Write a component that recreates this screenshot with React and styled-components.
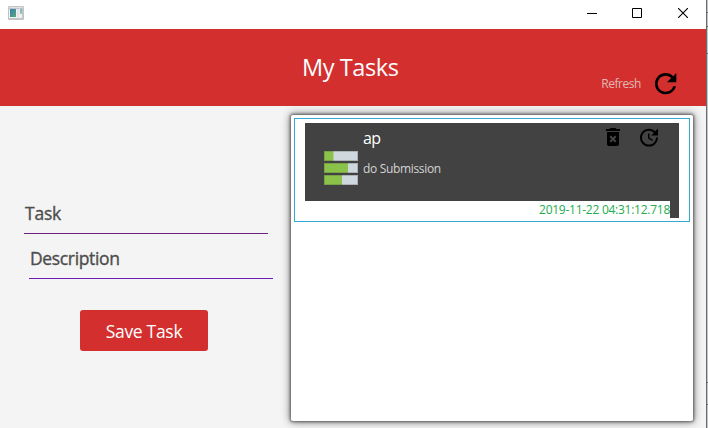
import React from "react";
import styled, { createGlobalStyle } from "styled-components";
import { MdRefresh, MdDeleteForever, MdUpdate } from "react-icons/md";

const GlobalStyle = createGlobalStyle`
  body { margin: 0; background: #fff; overflow: hidden; font-family: "Open Sans", "Noto Sans", sans-serif; }
  *, *::before, *::after { box-sizing: border-box; }
  svg { display: block; flex: none; }
`;

const Screen = styled.div`
  display: grid;
  grid-template-columns: 706px 2px;
  width: 708px;
  height: 428px;
`;

const Window = styled.div`
  display: flex;
  flex-direction: column;
  min-width: 0;
  background: #f4f4f4;
`;

const Backdrop = styled.div`
  display: flex;
  flex-direction: column;
  border-left: 1px solid #6b6d6d;
  background: #c3c5c6;
`;

const Notch = styled.div`
  height: 1px;
  margin-top: ${(p) => p.$gap}px;
  background: #606263;
`;

const TitleBar = styled.div`
  display: flex;
  justify-content: space-between;
  height: 29px;
  padding: 6px 18px 0 8px;
  background: #fff;
`;

const WindowControls = styled.div`
  display: grid;
  grid-template-columns: 45px 46px 10px;
  padding-top: 2px;
`;

const Header = styled.header`
  display: grid;
  grid-template-columns: 302px 1fr auto;
  height: 77px;
  padding-right: 25px;
  background: #d32f2f;
`;

const Label = styled.span`
  display: block;
  white-space: nowrap;
  font-size: ${(p) => p.$size}px;
  line-height: ${(p) => p.$line}px;
  letter-spacing: ${(p) => p.$track || 0}px;
  color: ${(p) => p.$color};
  -webkit-text-stroke: ${(p) => p.$stroke || 0}px ${(p) => p.$color};
`;

const Title = styled.div`
  grid-column: 2;
  padding-top: 22px;
`;

const RefreshAction = styled.div`
  display: flex;
  gap: 8px;
  padding-top: 38px;
  span { padding-top: 7px; }
`;

const Body = styled.main`
  display: flex;
  height: 322px;
`;

const Form = styled.form`
  display: flex;
  flex-direction: column;
  width: 291px;
  padding-top: 94px;
`;

const Field = styled.div`
  width: 244px;
  height: ${(p) => p.$height}px;
  margin-left: ${(p) => p.$left}px;
  padding-left: 1px;
  border-bottom: 1px solid ${(p) => p.$line};
`;

const SaveButton = styled.button`
  display: flex;
  justify-content: center;
  width: 128px;
  height: 41px;
  margin: 31px 0 0 80px;
  padding: 8px 0 0;
  border: 0;
  border-radius: 3px;
  background: #d32f2f;
  font-family: inherit;
`;

const ListPanel = styled.section`
  width: 402px;
  height: 306px;
  margin-top: 9px;
  padding: 3px;
  background: #fff;
  border-radius: 2px;
  box-shadow: 0 0 3px 1px rgba(0, 0, 0, 0.5), 0 0 9px 1px rgba(0, 0, 0, 0.45);
`;

const ListCell = styled.div`
  width: 396px;
  height: 104px;
  padding: 4px 10px;
  border: 1px solid #33a9cf;
`;

const TaskCard = styled.article`
  display: grid;
  grid-template: 78px 17px / 365px 9px;
  width: 374px;
  background: #424242;
`;

const TaskMain = styled.div`
  display: grid;
  grid-template-columns: 58px 1fr auto;
  grid-column: 1 / 3;
  padding: 2px 18px 0 0;
`;

const ProgressIcon = styled.div`
  padding: 26px 0 0 19px;
`;

const TaskActions = styled.div`
  display: flex;
  gap: 12px;
`;

const DateBar = styled.div`
  display: flex;
  justify-content: flex-end;
  background: #fff;
`;

const AppIcon = () => (
  <svg width="16" height="14" viewBox="0 0 16 14">
    <defs>
      <linearGradient id="pane" x1="0" y1="0" x2="1" y2="1">
        <stop offset="0" stopColor="#3f79b5" />
        <stop offset="1" stopColor="#54ad74" />
      </linearGradient>
    </defs>
    <rect width="16" height="14" rx="1" fill="#bfc5c8" />
    <rect x="1" y="1" width="14" height="1" fill="#dfe3e5" />
    <rect x="1" y="3" width="13" height="9" fill="#eef0f1" />
    <rect x="2" y="3" width="6" height="8" fill="url(#pane)" />
    <rect x="9" y="3" width="2" height="8" fill="#e0e3e5" />
    <rect x="12" y="3" width="2" height="3" fill="#7fb6d0" />
    <rect x="12" y="6" width="2" height="2" fill="#98cda6" />
  </svg>
);

const MinimizeIcon = () => (
  <svg width="10" height="10"><path d="M0 5.5h10" stroke="#000" /></svg>
);
const MaximizeIcon = () => (
  <svg width="10" height="10"><path d="M.5 .5h9v9h-9z" fill="none" stroke="#000" /></svg>
);
const CloseIcon = () => (
  <svg width="10" height="10"><path d="M0 0l10 10M10 0L0 10" stroke="#000" strokeWidth="1.1" /></svg>
);

const bars = [9.5, 24, 18];
const BarsIcon = () => (
  <svg width="34" height="34" viewBox="0 0 34 34">
    {bars.map((w, i) => (
      <g key={i}>
        <rect y={i * 12} width="34" height="10" fill="#cfd8dc" />
        <rect y={i * 12} width={w} height="10" fill="#8bc34a" />
        <rect x=".5" y={i * 12 + 0.5} width="33" height="9" fill="none" stroke="#424242" strokeOpacity=".25" />
      </g>
    ))}
  </svg>
);

export default function App() {
  return (
    <Screen>
      <GlobalStyle />
      <Window>
        <TitleBar>
          <AppIcon />
          <WindowControls>
            <MinimizeIcon />
            <MaximizeIcon />
            <CloseIcon />
          </WindowControls>
        </TitleBar>
        <Header>
          <Title>
            <Label $size={23.5} $line={33} $track={-0.4} $color="#fff">My Tasks</Label>
          </Title>
          <RefreshAction>
            <Label $size={12} $line={20} $track={-0.45} $color="#e0bab1">Refresh</Label>
            <MdRefresh size={32} viewBox="-0.5 -0.5 24 24" />
          </RefreshAction>
        </Header>
        <Body>
          <Form>
            <Field $left={24} $height={34} $line="#6f2180">
              <Label $size={17.5} $line={26} $track={-0.2} $stroke={0.35} $color="#4d4d4d">Task</Label>
            </Field>
            <Field $left={29} $height={45} $line="#6d1fb5">
              <Label $size={17.5} $line={48} $track={-0.35} $stroke={0.35} $color="#4d4d4d">Description</Label>
            </Field>
            <SaveButton type="button">
              <Label $size={17.5} $line={26} $track={-0.3} $color="#fff">Save Task</Label>
            </SaveButton>
          </Form>
          <ListPanel>
            <ListCell>
              <TaskCard>
                <TaskMain>
                  <ProgressIcon><BarsIcon /></ProgressIcon>
                  <div>
                    <Label $size={16} $line={26} $track={-0.6} $color="#fff">ap</Label>
                    <Label $size={12} $line={36} $track={-0.33} $color="#d4d4d4">do Submission</Label>
                  </div>
                  <TaskActions>
                    <MdDeleteForever size={24} />
                    <MdUpdate size={24} viewBox="0 -0.5 24 24" />
                  </TaskActions>
                </TaskMain>
                <DateBar>
                  <Label $size={12} $line={17} $track={-0.26} $color="#23ac4b">2019-11-22 04:31:12.718</Label>
                </DateBar>
              </TaskCard>
            </ListCell>
          </ListPanel>
        </Body>
      </Window>
      <Backdrop>
        <Notch $gap={12} />
        <Notch $gap={13} />
        <Notch $gap={26} />
        <Notch $gap={328} />
        <Notch $gap={21} />
      </Backdrop>
    </Screen>
  );
}
